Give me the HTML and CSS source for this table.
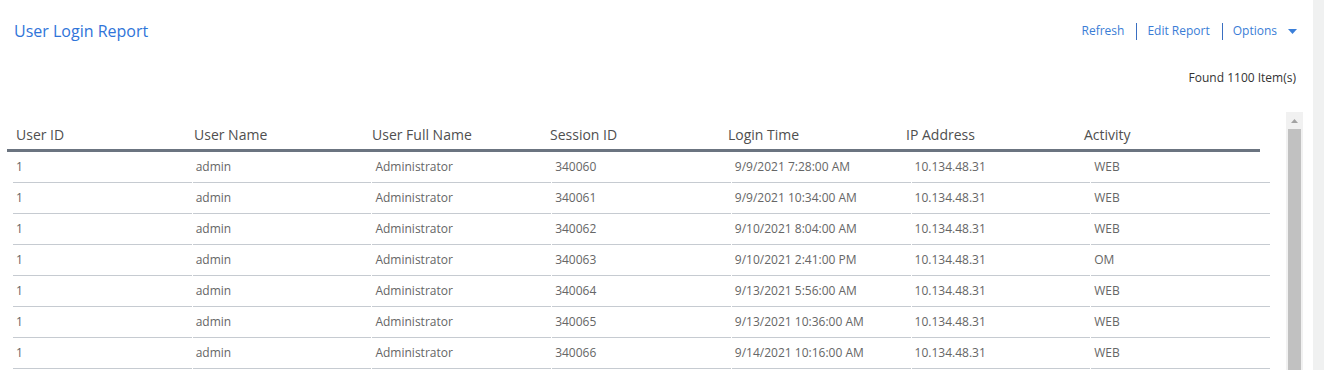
FILE: index.html
```html
<!DOCTYPE html>
<html lang="en">
<head>
<meta charset="utf-8">
<title>User Login Report</title>
<link rel="stylesheet" href="styles.css">
</head>
<body>
<div class="page">
  <main class="main">
    <header class="toolbar">
      <h1 class="title">User Login Report</h1>
      <nav class="actions">
        <a class="action" href="#">Refresh</a>
        <span class="sep"></span>
        <a class="action" href="#">Edit Report</a>
        <span class="sep"></span>
        <a class="action options" href="#">Options
          <svg class="caret" width="9" height="5" viewBox="0 0 9 5"><path d="M0 0H9L4.5 5Z" fill="#3b7fd9"/></svg>
        </a>
      </nav>
    </header>
    <div class="found">Found 1100 Item(s)</div>
    <section class="grid">
      <div class="grid-main">
        <div class="thead">
          <div class="th">User ID</div>
          <div class="th">User Name</div>
          <div class="th">User Full Name</div>
          <div class="th">Session ID</div>
          <div class="th">Login Time</div>
          <div class="th">IP Address</div>
          <div class="th">Activity</div>
        </div>
        <div class="tbody">
          <div class="tr"><div class="td">1</div><div class="td">admin</div><div class="td">Administrator</div><div class="td">340060</div><div class="td">9/9/2021 7:28:00 AM</div><div class="td">10.134.48.31</div><div class="td">WEB</div></div>
          <div class="tr"><div class="td">1</div><div class="td">admin</div><div class="td">Administrator</div><div class="td">340061</div><div class="td">9/9/2021 10:34:00 AM</div><div class="td">10.134.48.31</div><div class="td">WEB</div></div>
          <div class="tr"><div class="td">1</div><div class="td">admin</div><div class="td">Administrator</div><div class="td">340062</div><div class="td">9/10/2021 8:04:00 AM</div><div class="td">10.134.48.31</div><div class="td">WEB</div></div>
          <div class="tr"><div class="td">1</div><div class="td">admin</div><div class="td">Administrator</div><div class="td">340063</div><div class="td">9/10/2021 2:41:00 PM</div><div class="td">10.134.48.31</div><div class="td">OM</div></div>
          <div class="tr"><div class="td">1</div><div class="td">admin</div><div class="td">Administrator</div><div class="td">340064</div><div class="td">9/13/2021 5:56:00 AM</div><div class="td">10.134.48.31</div><div class="td">WEB</div></div>
          <div class="tr"><div class="td">1</div><div class="td">admin</div><div class="td">Administrator</div><div class="td">340065</div><div class="td">9/13/2021 10:36:00 AM</div><div class="td">10.134.48.31</div><div class="td">WEB</div></div>
          <div class="tr"><div class="td">1</div><div class="td">admin</div><div class="td">Administrator</div><div class="td">340066</div><div class="td">9/14/2021 10:16:00 AM</div><div class="td">10.134.48.31</div><div class="td">WEB</div></div>
        </div>
      </div>
      <div class="vscroll">
        <div class="vscroll-arrow"><svg width="7" height="4" viewBox="0 0 7 4"><path d="M0 4H7L3.5 0Z" fill="#a3a3a3"/></svg></div>
        <div class="vscroll-thumb"></div>
      </div>
    </section>
  </main>
  <div class="page-strip"></div>
</div>
</body>
</html>
```

FILE: styles.css
```css
html, body {
  margin: 0;
  padding: 0;
  background: #fff;
  height: 370px;
  overflow: hidden;
}
body {
  font-family: "Open Sans", "Noto Sans", sans-serif;
  color: #555;
}
.page {
  display: flex;
  height: 370px;
}
.main {
  flex: 1;
  min-width: 0;
  overflow: hidden;
}
.page-strip {
  width: 11px;
  background: #f0f1f1;
}
.toolbar {
  display: flex;
  justify-content: space-between;
  align-items: center;
  padding: 19px 16px 0 14px;
  height: 24px;
}
.title {
  margin: 0;
  font-size: 16px;
  font-weight: 400;
  color: #2f74d9;
  line-height: 24px;
}
.actions {
  display: flex;
  align-items: center;
  font-size: 12px;
}
.action {
  color: #3a7dd6;
  text-decoration: none;
  line-height: 18px;
}
.sep {
  width: 1px;
  height: 17px;
  background: #3a6fc1;
  margin: 0 10px 0 12px;
}
.options {
  display: flex;
  align-items: center;
}
.caret {
  margin-left: 11px;
}
.found {
  text-align: right;
  font-size: 12px;
  color: #333;
  padding: 26px 17px 0 0;
  line-height: 18px;
}
.grid {
  display: flex;
  margin-top: 26px;
  padding-left: 7px;
}
.grid-main {
  width: 1263px;
}
.thead {
  display: grid;
  grid-template-columns: repeat(7, 178px);
  border-bottom: 3px solid #6b7480;
  width: 1253px;
  height: 36px;
  box-sizing: content-box;
}
.th {
  font-size: 14px;
  color: #4f4f4f;
  padding-left: 9px;
  line-height: 20px;
  padding-top: 12px;
}
.tbody {
  margin-left: 6px;
  width: 1257px;
}
.tr {
  display: grid;
  grid-template-columns: repeat(7, 1fr);
  column-gap: 1px;
}
.td {
  font-size: 12px;
  color: #666;
  padding-left: 3px;
  height: 30px;
  line-height: 30px;
  border-bottom: 1px solid #c6cbd1;
  white-space: nowrap;
}
.vscroll {
  margin-left: 16px;
  width: 17px;
  margin-top: -1px;
  background: #f1f1f1;
  display: flex;
  flex-direction: column;
  align-items: center;
  height: 270px;
}
.vscroll-arrow {
  height: 17px;
  display: flex;
  align-items: center;
  justify-content: center;
}
.vscroll-thumb {
  width: 13px;
  flex: 1;
  background: #c1c1c1;
}
```
